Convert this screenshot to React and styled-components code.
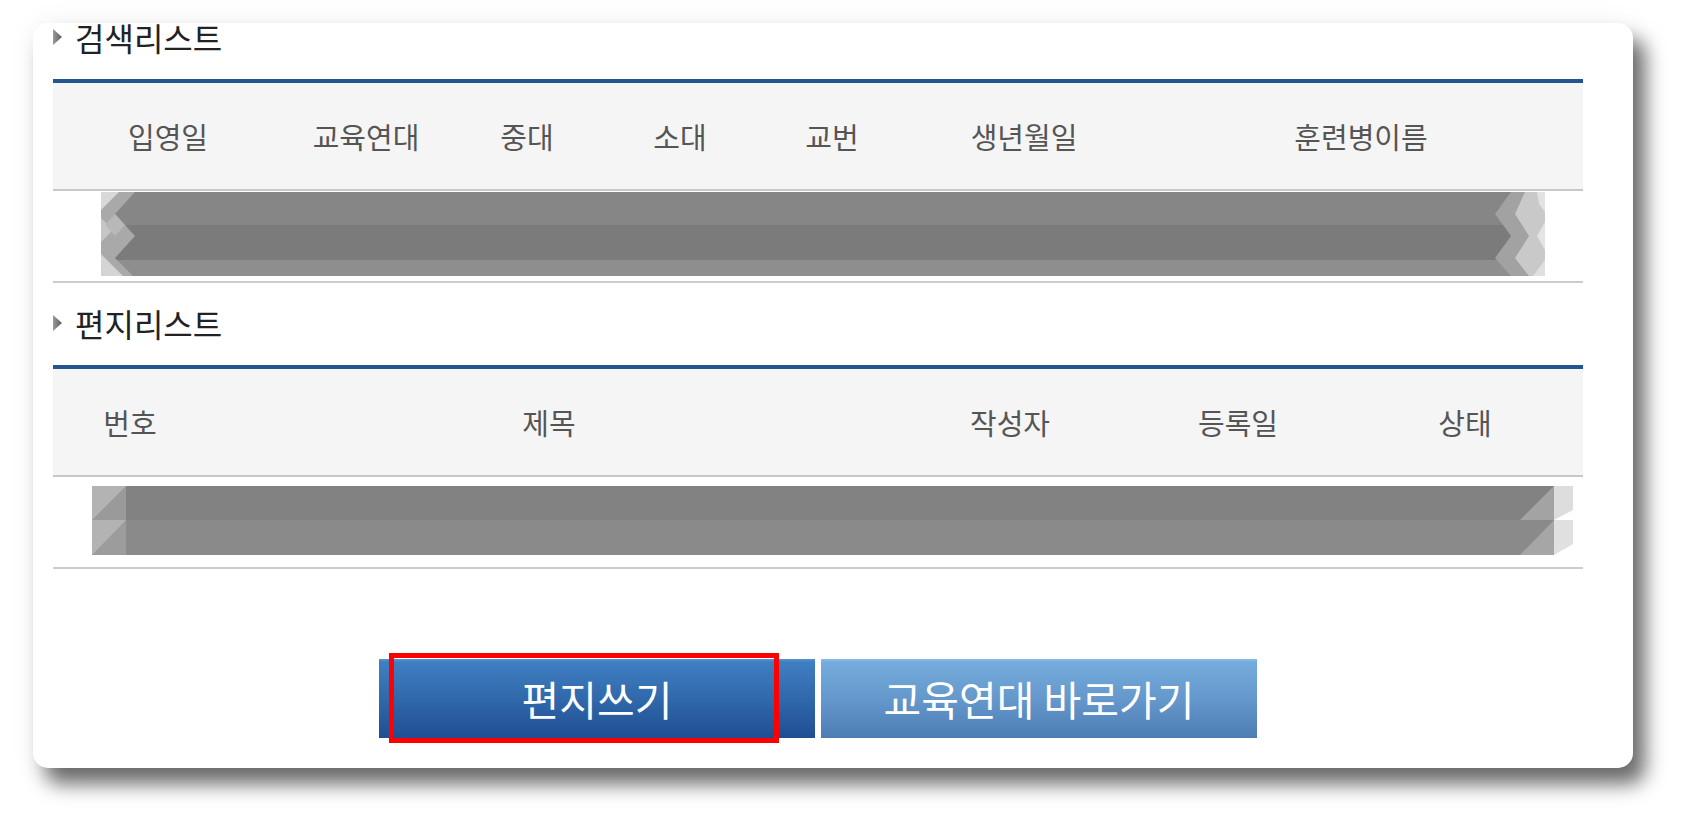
import React from 'react';
import styled, { createGlobalStyle } from 'styled-components';

const GlobalStyle = createGlobalStyle`
  html, body {
    margin: 0;
    padding: 0;
    background: #fff;
  }
  body {
    font-family: "Noto Sans CJK KR", "Noto Sans", sans-serif;
  }
`;

const Page = styled.div`
  width: 1688px;
  height: 834px;
  box-sizing: border-box;
  padding: 23px 0 0 33px;
  overflow: hidden;
`;

const Card = styled.div`
  width: 1600px;
  box-sizing: border-box;
  padding: 0 50px 30px 20px;
  background: #fff;
  border-radius: 15px;
  overflow: hidden;
  box-shadow: 12px 16px 20px rgba(0, 0, 0, 0.58), 0 0 30px rgba(0, 0, 0, 0.05);
`;

const Section = styled.section`
  margin-top: ${(p) => (p.$first ? '-3px' : '23px')};
`;

const Title = styled.h2`
  display: flex;
  align-items: center;
  gap: 13px;
  height: 34px;
  margin: 0 0 25px;
  font-size: 32px;
  font-weight: 400;
  line-height: 34px;
  color: #222;
`;

const TableHead = styled.div`
  display: grid;
  grid-template-columns: ${(p) => p.$cols};
  align-items: center;
  height: 106px;
  background: #f5f5f5;
  border-top: 4px solid #23568f;
  border-bottom: 2px solid #c8c8c8;
`;

const HeadCell = styled.div`
  text-align: center;
  font-size: 29px;
  line-height: 1;
  color: #555;
`;

const BodyRow = styled.div`
  display: flex;
  align-items: flex-start;
  height: 90px;
  border-bottom: 2px solid #cccccc;
`;

const RedactBar = styled.div`
  display: flex;
  height: ${(p) => p.$h}px;
  width: ${(p) => p.$w}px;
  margin: ${(p) => p.$top}px 0 0 ${(p) => p.$left}px;
`;

const Bands = styled.div`
  flex: 1;
  display: flex;
  flex-direction: column;
`;

const Band = styled.div`
  height: ${(p) => p.$h}px;
  background: ${(p) => p.$c};
`;

const Cap = styled.svg`
  display: block;
  flex: none;
`;

const ButtonRow = styled.div`
  display: flex;
  justify-content: center;
  gap: 6px;
  margin-top: 90px;
`;

const Button = styled.button`
  position: relative;
  width: 436px;
  height: 79px;
  padding: 0;
  border: none;
  font-family: inherit;
  font-size: 41px;
  line-height: 79px;
  color: #fff;
  cursor: pointer;
  background: ${(p) =>
    p.$light
      ? 'linear-gradient(#8dbde6 0, #74acdc 3px, #6598cc 50%, #4d7db3 100%)'
      : 'linear-gradient(#5a93cf 0, #3f7fc1 3px, #2e66a9 55%, #1f4e92 100%)'};
`;

const Highlight = styled.span`
  position: absolute;
  left: 10px;
  top: -6px;
  width: 390px;
  height: 90px;
  box-sizing: border-box;
  border: 5px solid #ff0000;
  pointer-events: none;
`;

function Arrow() {
  return (
    <svg width="9" height="16" viewBox="0 0 9 16">
      <defs>
        <linearGradient id="arr" x1="0" y1="0" x2="1" y2="0">
          <stop offset="0" stopColor="#9a9a9a" />
          <stop offset="1" stopColor="#5c5c5c" />
        </linearGradient>
      </defs>
      <polygon points="0,0 9,8 0,16" fill="url(#arr)" />
    </svg>
  );
}

const searchCols = ['입영일', '교육연대', '중대', '소대', '교번', '생년월일', '훈련병이름'];
const letterCols = ['번호', '제목', '작성자', '등록일', '상태'];

function SearchRedact() {
  return (
    <RedactBar $h={84} $w={1444} $top={1} $left={48}>
      <Cap width="50" height="84" viewBox="0 0 50 84">
        <rect x="0" y="0" width="50" height="33" fill="#868686" />
        <rect x="0" y="33" width="50" height="35" fill="#7b7b7b" />
        <rect x="0" y="68" width="50" height="16" fill="#8e8e8e" />
        <polygon points="0,0 34,0 14,22 34,44 14,66 32,84 0,84" fill="#a9a9a9" />
        <polygon points="0,0 18,0 0,18" fill="#d8d8d8" />
        <polygon points="0,26 12,38 0,50" fill="#c6c6c6" />
        <polygon points="0,62 22,84 0,84" fill="#d4d4d4" />
        <polygon points="14,22 24,33 14,44 4,33" fill="#b8b8b8" />
      </Cap>
      <Bands>
        <Band $h={33} $c="#868686" />
        <Band $h={35} $c="#7b7b7b" />
        <Band $h={16} $c="#8e8e8e" />
      </Bands>
      <Cap width="50" height="84" viewBox="0 0 50 84">
        <rect x="0" y="0" width="50" height="33" fill="#868686" />
        <rect x="0" y="33" width="50" height="35" fill="#7b7b7b" />
        <rect x="0" y="68" width="50" height="16" fill="#8e8e8e" />
        <polygon points="16,0 50,0 50,84 16,84 0,66 16,44 0,22" fill="#a2a2a2" />
        <polygon points="30,0 50,0 50,84 34,84 20,66 34,44 20,22" fill="#c9c9c9" />
        <polygon points="42,0 50,0 50,20 44,12" fill="#e2e2e2" />
        <polygon points="50,30 42,44 50,58" fill="#e4e4e4" />
        <polygon points="50,68 38,84 50,84" fill="#e0e0e0" />
      </Cap>
    </RedactBar>
  );
}

function LetterRedact() {
  return (
    <RedactBar $h={69} $w={1481} $top={9} $left={39}>
      <Cap width="34" height="69" viewBox="0 0 34 69">
        <rect x="0" y="0" width="34" height="34" fill="#b3b3b3" />
        <polygon points="0,34 34,0 34,34" fill="#9a9a9a" />
        <rect x="0" y="34" width="34" height="35" fill="#b3b3b3" />
        <polygon points="0,69 34,34 34,69" fill="#9c9c9c" />
      </Cap>
      <Bands>
        <Band $h={34} $c="#828282" />
        <Band $h={35} $c="#8a8a8a" />
      </Bands>
      <Cap width="53" height="69" viewBox="0 0 53 69">
        <rect x="0" y="0" width="34" height="34" fill="#828282" />
        <polygon points="0,34 34,0 34,34" fill="#a3a3a3" />
        <rect x="0" y="34" width="34" height="35" fill="#8a8a8a" />
        <polygon points="0,69 34,34 34,69" fill="#a6a6a6" />
        <polygon points="34,0 53,0 53,24 34,34" fill="#dddddd" />
        <polygon points="34,34 53,34 53,58 34,69" fill="#e0e0e0" />
      </Cap>
    </RedactBar>
  );
}

export default function App() {
  return (
    <>
      <GlobalStyle />
      <Page>
        <Card>
          <Section $first>
            <Title>
              <Arrow />
              검색리스트
            </Title>
            <TableHead $cols="230px 166px 156px 150px 154px 230px 1fr">
              {searchCols.map((c) => (
                <HeadCell key={c}>{c}</HeadCell>
              ))}
            </TableHead>
            <BodyRow>
              <SearchRedact />
            </BodyRow>
          </Section>

          <Section>
            <Title>
              <Arrow />
              편지리스트
            </Title>
            <TableHead $cols="154px 684px 238px 218px 1fr">
              {letterCols.map((c) => (
                <HeadCell key={c}>{c}</HeadCell>
              ))}
            </TableHead>
            <BodyRow>
              <LetterRedact />
            </BodyRow>
          </Section>

          <ButtonRow>
            <Button>
              편지쓰기
              <Highlight />
            </Button>
            <Button $light>교육연대 바로가기</Button>
          </ButtonRow>
        </Card>
      </Page>
    </>
  );
}
